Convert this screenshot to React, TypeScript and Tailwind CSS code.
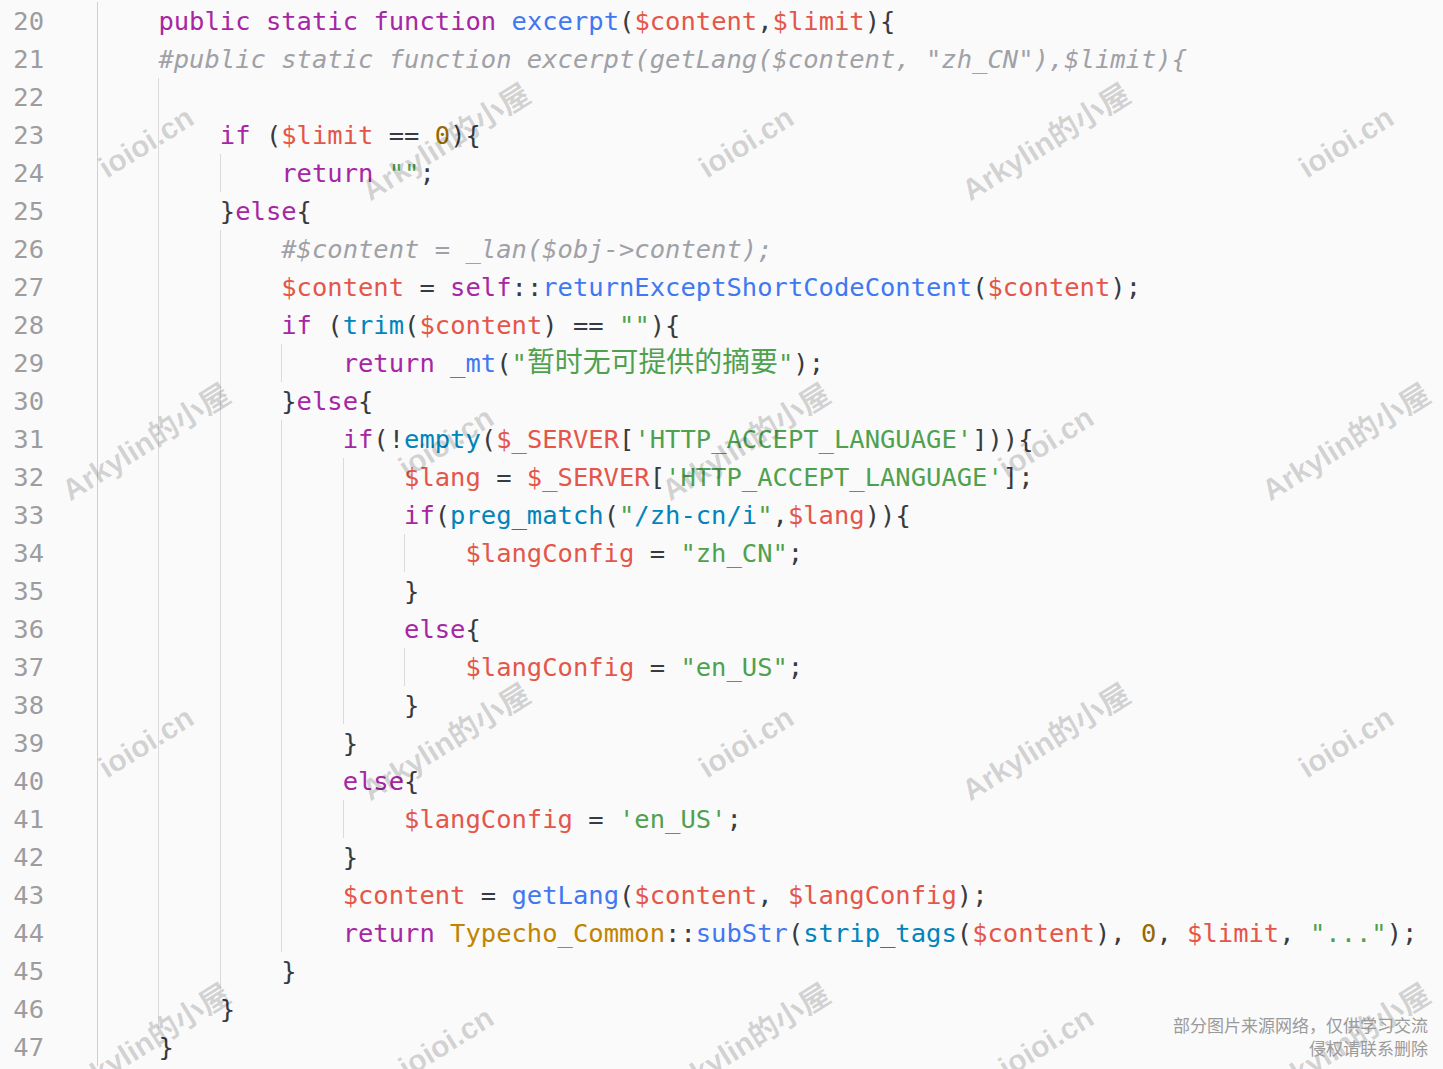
import React from 'react';

// token classes, roughly the One Light palette
const C: Record<string, string> = {
  kw: 'text-[#a626a4]',
  fn: 'text-[#4078f2]',
  bi: 'text-[#0184bc]',
  v: 'text-[#e45649]',
  s: 'text-[#50a14f]',
  cj: 'text-[#50a14f] text-[27.9px]',
  n: 'text-[#986801]',
  cl: 'text-[#c18401]',
  p: 'text-[#383a42]',
  cm: 'text-[#a0a1a7] italic',
};

type Tok = [keyof typeof C, string];

const lines: { n: number; indent: number; toks: Tok[] }[] = [
  { n: 20, indent: 1, toks: [['kw', 'public'], ['p', ' '], ['kw', 'static'], ['p', ' '], ['kw', 'function'], ['p', ' '], ['fn', 'excerpt'], ['p', '('], ['v', '$content'], ['p', ','], ['v', '$limit'], ['p', '){']] },
  { n: 21, indent: 1, toks: [['cm', '#public static function excerpt(getLang($content, "zh_CN"),$limit){']] },
  { n: 22, indent: 2, toks: [] },
  { n: 23, indent: 2, toks: [['kw', 'if'], ['p', ' ('], ['v', '$limit'], ['p', ' == '], ['n', '0'], ['p', '){']] },
  { n: 24, indent: 3, toks: [['kw', 'return'], ['p', ' '], ['s', '""'], ['p', ';']] },
  { n: 25, indent: 2, toks: [['p', '}'], ['kw', 'else'], ['p', '{']] },
  { n: 26, indent: 3, toks: [['cm', '#$content = _lan($obj->content);']] },
  { n: 27, indent: 3, toks: [['v', '$content'], ['p', ' = '], ['kw', 'self'], ['p', '::'], ['fn', 'returnExceptShortCodeContent'], ['p', '('], ['v', '$content'], ['p', ');']] },
  { n: 28, indent: 3, toks: [['kw', 'if'], ['p', ' ('], ['bi', 'trim'], ['p', '('], ['v', '$content'], ['p', ') == '], ['s', '""'], ['p', '){']] },
  { n: 29, indent: 4, toks: [['kw', 'return'], ['p', ' '], ['fn', '_mt'], ['p', '('], ['s', '"'], ['cj', '暂时无可提供的摘要'], ['s', '"'], ['p', ');']] },
  { n: 30, indent: 3, toks: [['p', '}'], ['kw', 'else'], ['p', '{']] },
  { n: 31, indent: 4, toks: [['kw', 'if'], ['p', '(!'], ['bi', 'empty'], ['p', '('], ['v', '$_SERVER'], ['p', '['], ['s', "'HTTP_ACCEPT_LANGUAGE'"], ['p', '])){']] },
  { n: 32, indent: 5, toks: [['v', '$lang'], ['p', ' = '], ['v', '$_SERVER'], ['p', '['], ['s', "'HTTP_ACCEPT_LANGUAGE'"], ['p', '];']] },
  { n: 33, indent: 5, toks: [['kw', 'if'], ['p', '('], ['bi', 'preg_match'], ['p', '('], ['s', '"'], ['bi', '/zh-cn/i'], ['s', '"'], ['p', ','], ['v', '$lang'], ['p', ')){']] },
  { n: 34, indent: 6, toks: [['v', '$langConfig'], ['p', ' = '], ['s', '"zh_CN"'], ['p', ';']] },
  { n: 35, indent: 5, toks: [['p', '}']] },
  { n: 36, indent: 5, toks: [['kw', 'else'], ['p', '{']] },
  { n: 37, indent: 6, toks: [['v', '$langConfig'], ['p', ' = '], ['s', '"en_US"'], ['p', ';']] },
  { n: 38, indent: 5, toks: [['p', '}']] },
  { n: 39, indent: 4, toks: [['p', '}']] },
  { n: 40, indent: 4, toks: [['kw', 'else'], ['p', '{']] },
  { n: 41, indent: 5, toks: [['v', '$langConfig'], ['p', ' = '], ['s', "'en_US'"], ['p', ';']] },
  { n: 42, indent: 4, toks: [['p', '}']] },
  { n: 43, indent: 4, toks: [['v', '$content'], ['p', ' = '], ['fn', 'getLang'], ['p', '('], ['v', '$content'], ['p', ', '], ['v', '$langConfig'], ['p', ');']] },
  { n: 44, indent: 4, toks: [['kw', 'return'], ['p', ' '], ['cl', 'Typecho_Common'], ['p', '::'], ['fn', 'subStr'], ['p', '('], ['bi', 'strip_tags'], ['p', '('], ['v', '$content'], ['p', '), '], ['n', '0'], ['p', ', '], ['v', '$limit'], ['p', ', '], ['s', '"..."'], ['p', ');']] },
  { n: 45, indent: 3, toks: [['p', '}']] },
  { n: 46, indent: 2, toks: [['p', '}']] },
  { n: 47, indent: 1, toks: [['p', '}']] },
];

// watermark grid: rows 300px apart, the two texts swap place every row
const marks: { x: number; y: number; text: string }[] = [];
[142, 442, 742, 1042].forEach((y, r) => {
  const a = r % 2 === 0 ? 'ioioi.cn' : 'Arkylin的小屋';
  const b = r % 2 === 0 ? 'Arkylin的小屋' : 'ioioi.cn';
  [146, 746, 1346].forEach(x => marks.push({ x, y, text: a }));
  [446, 1046].forEach(x => marks.push({ x, y, text: b }));
});

export default function App() {
  return (
    <div className="relative h-[1069px] w-full overflow-hidden bg-[#fafafa]">
      <div className="pt-[2px] font-['DejaVu_Sans_Mono','Noto_Sans_CJK_SC',monospace] text-[25.5px] leading-[38px] text-[#383a42]">
        {lines.map(line => (
          <div key={line.n} className="flex h-[38px] whitespace-pre">
            <div className="w-[97px] shrink-0 pr-[53px] text-right text-[#9d9d9f]">{line.n}</div>
            {Array.from({ length: line.indent }).map((_, i) => (
              <span
                key={i}
                className={`h-full w-[4ch] shrink-0 border-l ${i === 0 ? 'border-[#cfcfcf]' : 'border-[#dadada]'}`}
              />
            ))}
            <span>
              {line.toks.map(([k, t], i) => (
                <span key={i} className={C[k]}>{t}</span>
              ))}
            </span>
          </div>
        ))}
      </div>

      {/* watermarks */}
      <div className="pointer-events-none absolute inset-0 font-['Liberation_Sans','Noto_Sans_CJK_SC',sans-serif] text-[30px] font-bold text-black/[0.16]">
        {marks.map((m, i) => (
          <div
            key={i}
            className="absolute -translate-x-1/2 -translate-y-1/2 -rotate-[32deg] whitespace-nowrap"
            style={{ left: m.x, top: m.y }}
          >
            {m.text}
          </div>
        ))}
      </div>

      <div className="absolute bottom-[10px] right-[15px] text-right font-['Noto_Sans_CJK_SC',sans-serif] text-[17px] leading-[23px] text-[#9a9a9a]">
        <div>部分图片来源网络，仅供学习交流</div>
        <div>侵权请联系删除</div>
      </div>
    </div>
  );
}
